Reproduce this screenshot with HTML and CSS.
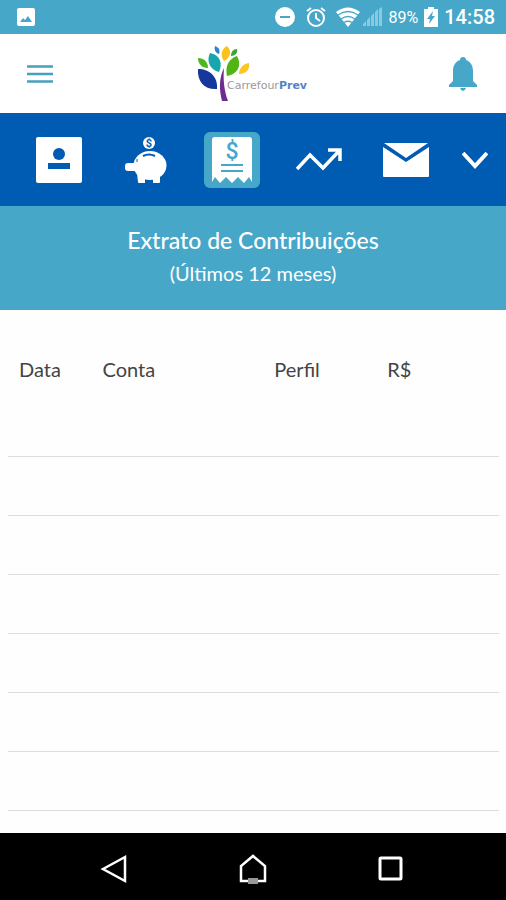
FILE: index.html
```html
<!DOCTYPE html>
<html lang="pt-BR">
<head>
    <meta charset="UTF-8">
    <meta name="viewport" content="width=device-width, initial-scale=1.0">
    <title>Extrato de Contribuições</title>
    <link rel="stylesheet" href="styles.css">
</head>
<body>

    <div class="status-bar">
        <svg width="20" height="20" viewBox="0 0 20 20">
            <rect x="1" y="1" width="18" height="18" rx="2" fill="#fff"/>
            <path d="M4 15l3-4 2 2 3-4 4 6z" fill="#47a7c9"/>
        </svg>
        <div class="status-icons">
            <svg width="22" height="22" viewBox="0 0 22 22">
                <circle cx="11" cy="11" r="10" fill="#fff"/>
                <path d="M6 11h10" stroke="#47a7c9" stroke-width="2"/>
            </svg>
            <svg width="28" height="22" viewBox="0 0 28 22" fill="none" stroke="#fff" stroke-width="2">
                <circle cx="14" cy="12" r="8"/>
                <path d="M14 7v5l4 3M5 5l4-3M23 5l-4-3"/>
            </svg>
            <div class="network">
                <svg width="24" height="20" viewBox="0 0 24 20">
                    <path d="M0 5Q12-4 24 5L12 20z" fill="#fff"/>
                    <path d="M2 8Q12 1 22 8M5 12Q12 7 19 12M8 15.500Q12 13 16 15.500" fill="none" stroke="#47a7c9" stroke-width="1.300"/>
                </svg>
                <svg width="20" height="20" viewBox="0 0 20 20" fill="#8cc9de">
                    <path d="M0 19v-2l3-3v5zM4 19v-6l3-3v9zM8 19V9l3-3v13zM12 19V5l3-3v17zM16 19V2l3-2v19z"/>
                </svg>
            </div>
            <span class="percent">89%</span>
            <svg width="14" height="20" viewBox="0 0 14 20">
                <path d="M4 0h6v2h4v18H0V2h4z" fill="#fff"/>
                <path d="M9 4l-6 8h3l-1 5 6-8H8z" fill="#47a7c9"/>
            </svg>
            <span class="clock">14:58</span>
        </div>
    </div>

    <header class="header">
        <button class="icon-btn" aria-label="Menu">
            <svg width="28" height="20" viewBox="0 0 28 20" stroke="#47a0bd" stroke-width="2.500">
                <path d="M1 2.500h26M1 10h26M1 17.500h26"/>
            </svg>
        </button>
        <svg class="logo" width="126" height="62" viewBox="-7 0 126 62">
            <path d="M3 26C15 26 23 34 22 46C10 47 2 39 3 26z" fill="#16379b"/>
            <path d="M3 15C9 15 13 19 13 25C7 25 3 21 3 15z" fill="#4cb81f"/>
            <path d="M15 10C25 12 28 20 24 29C15 27 11 18 15 10z" fill="#17a6ac"/>
            <path d="M20 3C25 5 25 8 24 11C20 10 19 6 20 3z" fill="#2d86c8"/>
            <path d="M32 3C37 8 36 14 29 18C25 13 26 6 32 3z" fill="#fbc21b"/>
            <path d="M42 6C43 10 40 13 36 13C36 9 38 6 42 6z" fill="#36a82d"/>
            <path d="M42 13C47 22 43 31 32 33C30 24 33 16 42 13z" fill="#4fb414"/>
            <path d="M54 20C55 27 51 31 44 31C44 25 48 21 54 20z" fill="#fbc628"/>
            <path d="M29 25C28 36 29 47 33 58H27C24 46 24 35 29 25z" fill="#6f2c8f"/>
            <text class="logo-text" x="32" y="46">Carrefour<tspan class="logo-prev">Prev</tspan></text>
        </svg>
        <button class="icon-btn" aria-label="Notificações">
            <svg width="30" height="36" viewBox="0 0 30 36" fill="#47a7c9">
                <path d="M15 1c2 0 3 1 3 3 5 2 7 6 7 11v10l4 4v2H1v-2l4-4V15c0-5 2-9 7-11 0-2 1-3 3-3zM12 32h6q-1 3-3 3t-3-3z"/>
            </svg>
        </button>
    </header>

    <nav class="tabs">
        <button class="tab" aria-label="Cadastro">
            <svg width="46" height="46" viewBox="0 0 46 46">
                <rect width="46" height="46" rx="2" fill="#fff"/>
                <circle cx="23" cy="17" r="6" fill="#005bb3"/>
                <path d="M12 26h22v6H12z" fill="#005bb3"/>
            </svg>
        </button>
        <button class="tab" aria-label="Saldo">
            <svg width="42" height="46" viewBox="0 0 42 46">
                <circle cx="24" cy="6" r="6" fill="#fff"/>
                <text class="coin" x="24" y="10">$</text>
                <g fill="#fff">
                    <ellipse cx="25" cy="28.500" rx="16.500" ry="14.500"/>
                    <rect y="26" width="14" height="8" rx="3"/>
                    <path d="M12 36h8v10h-6q-1 0-1-1zM28 36h7v9q0 1-1 1h-6z"/>
                </g>
                <path d="M18 19Q24 16 30 19" fill="none" stroke="#005bb3" stroke-width="2"/>
                <path d="M12 22v3" stroke="#005bb3"/>
            </svg>
        </button>
        <button class="tab active" aria-label="Extrato">
            <svg width="40" height="46" viewBox="0 0 40 46">
                <path d="M3 0h34q3 0 3 3v42l-3-5-5 6-6-6-6 6-6-6-6 6-5-6-3 5V3q0-3 3-3z" fill="#fff"/>
                <text class="receipt-sign" x="20" y="22">$</text>
                <path d="M9 28h22M9 34h22" stroke="#47a7c9" stroke-width="2"/>
            </svg>
        </button>
        <button class="tab" aria-label="Rentabilidade">
            <svg width="46" height="24" viewBox="0 0 46 24" fill="none" stroke="#fff" stroke-width="3.500">
                <path d="M1 21L14 7l13 13L43 3M32 2h12v11"/>
            </svg>
        </button>
        <button class="tab" aria-label="Mensagens">
            <svg width="46" height="34" viewBox="0 0 46 34" fill="#fff">
                <path d="M1 0h44L23 15zM0 4l23 15L46 4v29q0 1-1 1H1q-1 0-1-1z"/>
            </svg>
        </button>
        <button class="tab" aria-label="Mais opções">
            <svg width="26" height="18" viewBox="0 0 26 18" fill="none" stroke="#fff" stroke-width="4">
                <path d="M1 2l12 13L25 2"/>
            </svg>
        </button>
    </nav>

    <section class="title">
        <h1>Extrato de Contribuições</h1>
        <p>(Últimos 12 meses)</p>
    </section>

    <main class="content">
        <table>
            <thead>
                <tr>
                    <th class="col-data">Data</th>
                    <th class="col-conta">Conta</th>
                    <th class="col-perfil">Perfil</th>
                    <th>R$</th>
                </tr>
            </thead>
            <tbody>
                <tr><td></td><td></td><td></td><td></td></tr>
                <tr><td></td><td></td><td></td><td></td></tr>
                <tr><td></td><td></td><td></td><td></td></tr>
                <tr><td></td><td></td><td></td><td></td></tr>
                <tr><td></td><td></td><td></td><td></td></tr>
                <tr><td></td><td></td><td></td><td></td></tr>
                <tr><td></td><td></td><td></td><td></td></tr>
            </tbody>
        </table>
    </main>

    <footer class="system-nav">
        <button class="icon-btn" aria-label="Voltar">
            <svg width="30" height="30" viewBox="0 0 30 30" fill="none" stroke="#fff" stroke-width="2.500">
                <path d="M3 15L25 3v24z"/>
            </svg>
        </button>
        <button class="icon-btn" aria-label="Início">
            <svg width="30" height="30" viewBox="0 0 30 30" fill="none" stroke="#fff" stroke-width="2.500">
                <path d="M3 27V12L15 2l12 10v15z"/>
                <path d="M10 27h10" stroke="#999" stroke-width="6"/>
            </svg>
        </button>
        <button class="icon-btn" aria-label="Recentes">
            <svg width="30" height="30" viewBox="0 0 30 30" fill="none" stroke="#fff" stroke-width="3">
                <rect x="4" y="4" width="21" height="21" rx="1"/>
            </svg>
        </button>
    </footer>

</body>
</html>
```
FILE: styles.css
```css
* {
    box-sizing: border-box;
}

body {
    margin: 0;
    min-height: 100vh;
    display: flex;
    flex-direction: column;
    font-family: Lato, "Open Sans", sans-serif;
    background-color: #fefefe;
    color: #444;
}

button {
    border: none;
    padding: 0;
    background: none;
    cursor: pointer;
}

svg {
    display: block;
}

.status-bar {
    display: flex;
    justify-content: space-between;
    align-items: center;
    height: 34px;
    padding: 0 11px 0 16px;
    background-color: #47a7c9;
    color: #fff;
    font-family: Roboto, sans-serif;
}

.status-icons {
    display: flex;
    align-items: center;
    gap: 6px;
}

.network {
    display: flex;
    gap: 3px;
}

.percent {
    font-size: 16px;
}

.clock {
    font-size: 20px;
    font-weight: 500;
}

.header {
    display: flex;
    justify-content: space-between;
    align-items: center;
    height: 79px;
    padding: 0 28px 0 26px;
    background-color: #fff;
}

.logo-text {
    font-family: "DejaVu Sans", sans-serif;
    font-size: 11px;
    fill: #999;
}

.logo-prev {
    font-weight: bold;
    fill: #5583c4;
}

.tabs {
    display: grid;
    grid-template-columns: repeat(5, 1fr) 52px;
    align-items: center;
    justify-items: center;
    height: 93px;
    padding: 0 5px 0 16px;
    background-color: #005bb3;
}

.tab {
    display: flex;
    justify-content: center;
    align-items: center;
    width: 56px;
    height: 56px;
    border-radius: 6px;
}

.tab.active {
    background-color: #47a7c9;
}

.coin,
.receipt-sign {
    font-family: Roboto, sans-serif;
    text-anchor: middle;
}

.coin {
    font-size: 11px;
    font-weight: bold;
    fill: #005bb3;
}

.receipt-sign {
    font-size: 23px;
    font-weight: 500;
    fill: #47a7c9;
}

.title {
    height: 104px;
    padding-top: 19px;
    text-align: center;
    background-color: #47a7c9;
    color: #fff;
}

.title h1 {
    margin: 0;
    font-size: 23px;
    line-height: 30px;
    font-weight: 500;
}

.title p {
    margin: 3px 0 0;
    font-size: 20px;
    line-height: 30px;
}

.content {
    flex: 1;
    padding: 30px 7px 20px 8px;
}

table {
    width: 100%;
    table-layout: fixed;
    border-collapse: collapse;
}

th {
    height: 57px;
    padding: 0 0 0 11px;
    font-size: 20px;
    font-weight: 400;
    text-align: left;
}

td {
    height: 59px;
    border-bottom: 1px solid #ddd;
}

.col-data {
    width: 17%;
}

.col-conta {
    width: 35%;
}

.col-perfil {
    width: 23%;
}

.system-nav {
    display: flex;
    justify-content: center;
    align-items: center;
    gap: 108px;
    height: 67px;
    padding-top: 4px;
    background-color: #000;
}
```
